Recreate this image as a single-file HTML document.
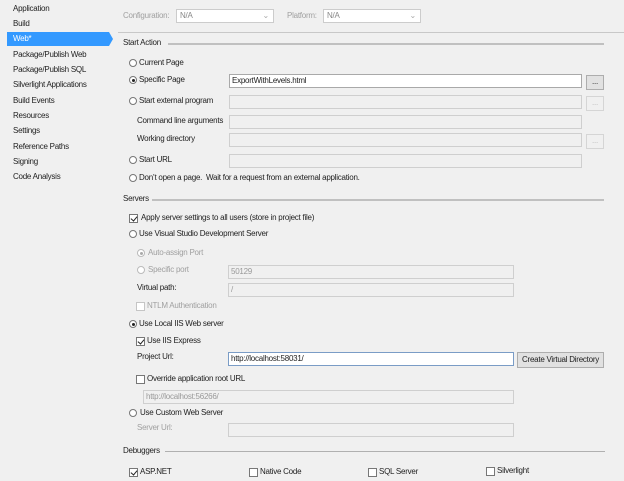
<!DOCTYPE html>
<html><head><style>
*{margin:0;padding:0;box-sizing:border-box}
body{width:624px;height:481px;background:#f0f0f0;font-family:"Liberation Sans",sans-serif;font-size:8px;letter-spacing:-0.25px;color:#1e1e1e;position:relative;overflow:hidden}
.a{position:absolute;white-space:nowrap;line-height:10px}
.g{color:#a0a0a0}
.in{position:absolute;border:1px solid #cfcfcf;background:#f0f0f0;height:14px}
.w{background:#fff;border-color:#a9a9a9}
.r{position:absolute;width:8px;height:8px;border:1px solid #777;border-radius:50%;background:#fff}
.r.d{border-color:#bbb}
.r.on::after{content:"";position:absolute;left:1.5px;top:1.5px;width:3px;height:3px;border-radius:50%;background:#222}
.r.d.on::after{background:#aaa}
.c{position:absolute;width:9px;height:9px;border:1px solid #777;background:#fff}
.c.d{border-color:#c5c5c5}
.c.on::after{content:"";position:absolute;left:2px;top:0px;width:3px;height:5px;border:solid #222;border-width:0 1.5px 1.5px 0;transform:rotate(40deg)}
.hl{position:absolute;height:1px;background:#b5b5b5}
.btn{position:absolute;border:1px solid #adadad;background:#e1e1e1;text-align:center;line-height:12px}
.btn.d{border-color:#d5d5d5;background:#f0f0f0;color:#bbb}
</style></head><body>
<div class="a" style="left:13px;top:4px">Application</div>
<div class="a" style="left:13px;top:19px">Build</div>
<div style="position:absolute;left:7px;top:32px;width:102px;height:14px;background:#3399ff"></div>
<div style="position:absolute;left:109px;top:32px;width:0;height:0;border-top:7px solid transparent;border-bottom:7px solid transparent;border-left:4px solid #3399ff"></div>
<div class="a" style="left:13px;top:34px;color:#fff">Web*</div>
<div class="a" style="left:13px;top:50px">Package/Publish Web</div>
<div class="a" style="left:13px;top:65px">Package/Publish SQL</div>
<div class="a" style="left:13px;top:80px">Silverlight Applications</div>
<div class="a" style="left:13px;top:96px">Build Events</div>
<div class="a" style="left:13px;top:111px">Resources</div>
<div class="a" style="left:13px;top:126px">Settings</div>
<div class="a" style="left:13px;top:142px">Reference Paths</div>
<div class="a" style="left:13px;top:157px">Signing</div>
<div class="a" style="left:13px;top:172px">Code Analysis</div>

<div class="a g" style="left:123px;top:11px">Configuration:</div>
<div class="in w" style="left:176px;top:9px;width:98px;border-color:#ccc;padding-left:3px;line-height:12px;color:#888">N/A<span style="position:absolute;right:4px;color:#aaa">⌄</span></div>
<div class="a g" style="left:287px;top:11px">Platform:</div>
<div class="in w" style="left:323px;top:9px;width:98px;border-color:#ccc;padding-left:3px;line-height:12px;color:#888">N/A<span style="position:absolute;right:4px;color:#aaa">⌄</span></div>
<div class="hl" style="left:118px;top:32px;width:506px;background:#c8c8c8"></div>

<div class="a" style="left:123px;top:38px">Start Action</div>
<div class="hl" style="left:168px;top:43px;width:436px;height:2px;background:#c0c0c0"></div>
<div class="r" style="left:129px;top:59px"></div><div class="a" style="left:139px;top:58px">Current Page</div>
<div class="r on" style="left:129px;top:76px"></div><div class="a" style="left:139px;top:75px">Specific Page</div>
<div class="in w" style="left:229px;top:74px;width:353px;padding-left:2px;line-height:12px">ExportWithLevels.html</div>
<div class="btn" style="left:586px;top:75px;width:18px;height:15px">...</div>
<div class="r" style="left:129px;top:97px"></div><div class="a" style="left:139px;top:96px">Start external program</div>
<div class="in" style="left:229px;top:95px;width:353px"></div>
<div class="btn d" style="left:586px;top:96px;width:18px;height:15px">...</div>
<div class="a" style="left:137px;top:116px">Command line arguments</div>
<div class="in" style="left:229px;top:115px;width:353px"></div>
<div class="a" style="left:137px;top:134px">Working directory</div>
<div class="in" style="left:229px;top:133px;width:353px"></div>
<div class="btn d" style="left:586px;top:134px;width:18px;height:15px">...</div>
<div class="r" style="left:129px;top:156px"></div><div class="a" style="left:139px;top:155px">Start URL</div>
<div class="in" style="left:229px;top:154px;width:353px"></div>
<div class="r" style="left:129px;top:174px"></div><div class="a" style="left:139px;top:173px">Don’t open a page.&nbsp; Wait for a request from an external application.</div>

<div class="a" style="left:123px;top:194px">Servers</div>
<div class="hl" style="left:152px;top:199px;width:452px;height:2px;background:#c0c0c0"></div>
<div class="c on" style="left:129px;top:214px"></div><div class="a" style="left:141px;top:213px">Apply server settings to all users (store in project file)</div>
<div class="r" style="left:129px;top:230px"></div><div class="a" style="left:139px;top:229px">Use Visual Studio Development Server</div>
<div class="r d on" style="left:137px;top:249px"></div><div class="a g" style="left:148px;top:248px">Auto-assign Port</div>
<div class="r d" style="left:137px;top:266px"></div><div class="a g" style="left:148px;top:265px">Specific port</div>
<div class="in" style="left:228px;top:265px;width:286px;padding-left:2px;line-height:12px;color:#999">50129</div>
<div class="a" style="left:137px;top:283px">Virtual path:</div>
<div class="in" style="left:228px;top:283px;width:286px;padding-left:2px;line-height:12px;color:#999">/</div>
<div class="c d" style="left:136px;top:302px"></div><div class="a g" style="left:147px;top:301px">NTLM Authentication</div>
<div class="r on" style="left:129px;top:320px"></div><div class="a" style="left:139px;top:319px">Use Local IIS Web server</div>
<div class="c on" style="left:136px;top:337px"></div><div class="a" style="left:147px;top:336px">Use IIS Express</div>
<div class="a" style="left:137px;top:352px">Project Url:</div>
<div class="in w" style="left:228px;top:352px;width:286px;padding-left:2px;line-height:12px;border-color:#7a9cc6">http://localhost:58031/</div>
<div class="btn" style="left:517px;top:352px;width:87px;height:16px;line-height:14px">Create Virtual Directory</div>
<div class="c" style="left:136px;top:375px"></div><div class="a" style="left:147px;top:374px">Override application root URL</div>
<div class="in" style="left:143px;top:390px;width:371px;padding-left:2px;line-height:12px;color:#999">http://localhost:56266/</div>
<div class="r" style="left:129px;top:409px"></div><div class="a" style="left:140px;top:408px">Use Custom Web Server</div>
<div class="a g" style="left:137px;top:423px">Server Url:</div>
<div class="in" style="left:228px;top:423px;width:286px"></div>

<div class="a" style="left:123px;top:446px">Debuggers</div>
<div class="hl" style="left:165px;top:451px;width:440px;background:#b0b0b0"></div>
<div class="c on" style="left:129px;top:468px"></div><div class="a" style="left:140px;top:467px">ASP.NET</div>
<div class="c" style="left:249px;top:468px"></div><div class="a" style="left:260px;top:467px">Native Code</div>
<div class="c" style="left:368px;top:468px"></div><div class="a" style="left:379px;top:467px">SQL Server</div>
<div class="c" style="left:486px;top:467px"></div><div class="a" style="left:497px;top:466px">Silverlight</div>
</body></html>
